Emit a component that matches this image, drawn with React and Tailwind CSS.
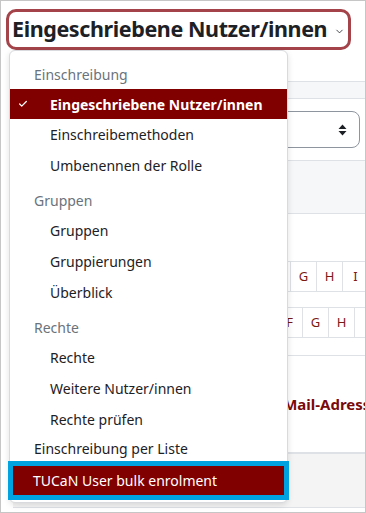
import { Check, ChevronDown } from "lucide-react";

const font = { fontFamily: '"Noto Sans", "Open Sans", sans-serif' };

function Header({ children, className = "" }) {
  return <div className={`h-[30px] flex items-center pl-6 text-[14px] text-[#6a737b] ${className}`}>{children}</div>;
}

function Item({ children }) {
  return <div className="h-[31px] flex items-center pl-10 text-[14px] text-[#1d2125]">{children}</div>;
}

function LetterRow({ letters, offset }) {
  return (
    <div className="flex h-[29px]" style={{ marginLeft: offset }}>
      {letters.map((l) => (
        <div key={l} className="w-[26px] shrink-0 flex items-center justify-center border-l border-[#dee2e6] text-[13px] text-[#7a1a12]">
          {l}
        </div>
      ))}
    </div>
  );
}

export default function App() {
  return (
    <div className="w-[366px] h-[513px] overflow-hidden bg-white border border-[#c6c6c6] relative" style={font}>
      <div className="pt-[8px] pl-[5px]">
        <div className="w-[345px] h-[41px] border-[3px] border-[#a4444a] rounded-[10px] flex items-center pl-[3px] pr-[3px]">
          <span className="text-[21.5px] font-bold text-[#1d2125] tracking-[-0.4px] whitespace-nowrap">Eingeschriebene Nutzer/innen</span>
          <ChevronDown className="ml-auto mt-[4px] text-[#1d2125]" size={11} strokeWidth={1.75} />
        </div>
      </div>

      {/* page content behind the menu */}
      <div className="mt-[31px] ml-[12px]">
        <div className="h-[18px] bg-[#f6f7f8] border-y border-[#dee2e6]" />
        <div className="flex justify-end pr-[5px] mt-[12px]">
          <div className="w-[290px] h-[37px] border border-[#8f959e] rounded-[8px] flex items-center justify-end pr-[12px]">
            <svg width="9" height="12" viewBox="0 0 9 12">
              <path d="M4.5 0.5 L8.5 5 L0.5 5 Z M4.5 11.5 L8.5 7 L0.5 7 Z" fill="#1d2125" />
            </svg>
          </div>
        </div>
        <div className="mt-[12px] h-[54px] bg-[#f6f7f8] border-y border-[#dee2e6]" />
        <div className="mt-[47px] border-y border-[#dee2e6]">
          <LetterRow letters={["G", "H", "I", "J"]} offset={277} />
        </div>
        <div className="mt-[15px] border-y border-[#dee2e6]">
          <LetterRow letters={["F", "G", "H", "I"]} offset={263} />
        </div>
        <div className="mt-[17px] h-[97px] border-t border-[#dee2e6] flex items-center pl-[257px]">
          <span className="text-[15px] font-bold text-[#7a0a0a] whitespace-nowrap">E-Mail-Adresse</span>
        </div>
        <div className="h-[56px] bg-[#f4f4f4] border-t-2 border-b border-[#dee2e6]" />
      </div>

      {/* dropdown menu */}
      <div className="absolute left-[8px] top-[49px] w-[279px] pt-[8px] pb-[2px] bg-white border border-[#d8dadd] rounded-[6px] shadow-[0_2px_6px_rgba(0,0,0,0.12)]">
        <Header>Einschreibung</Header>
        <div className="h-[30px] flex items-center bg-[#800000] text-white text-[14px] font-bold pl-10 relative">
          <Check className="absolute left-[8px] top-[10px]" size={10} strokeWidth={3} />
          Eingeschriebene Nutzer/innen
        </div>
        <Item>Einschreibemethoden</Item>
        <Item>Umbenennen der Rolle</Item>
        <Header className="mt-[4px]">Gruppen</Header>
        <Item>Gruppen</Item>
        <Item>Gruppierungen</Item>
        <Item>Überblick</Item>
        <Header className="mt-[4px]">Rechte</Header>
        <Item>Rechte</Item>
        <Item>Weitere Nutzer/innen</Item>
        <Item>Rechte prüfen</Item>
        <div className="h-[26px] pt-[1px] flex items-center pl-6 text-[14px] text-[#1d2125]">Einschreibung per Liste</div>
        <div className="-mx-[2px] border-[5px] border-[#00a3e0]">
          <div className="h-[29px] bg-[#800000] flex items-center pl-[20px] text-[14px] text-white">TUCaN User bulk enrolment</div>
        </div>
      </div>
    </div>
  );
}
